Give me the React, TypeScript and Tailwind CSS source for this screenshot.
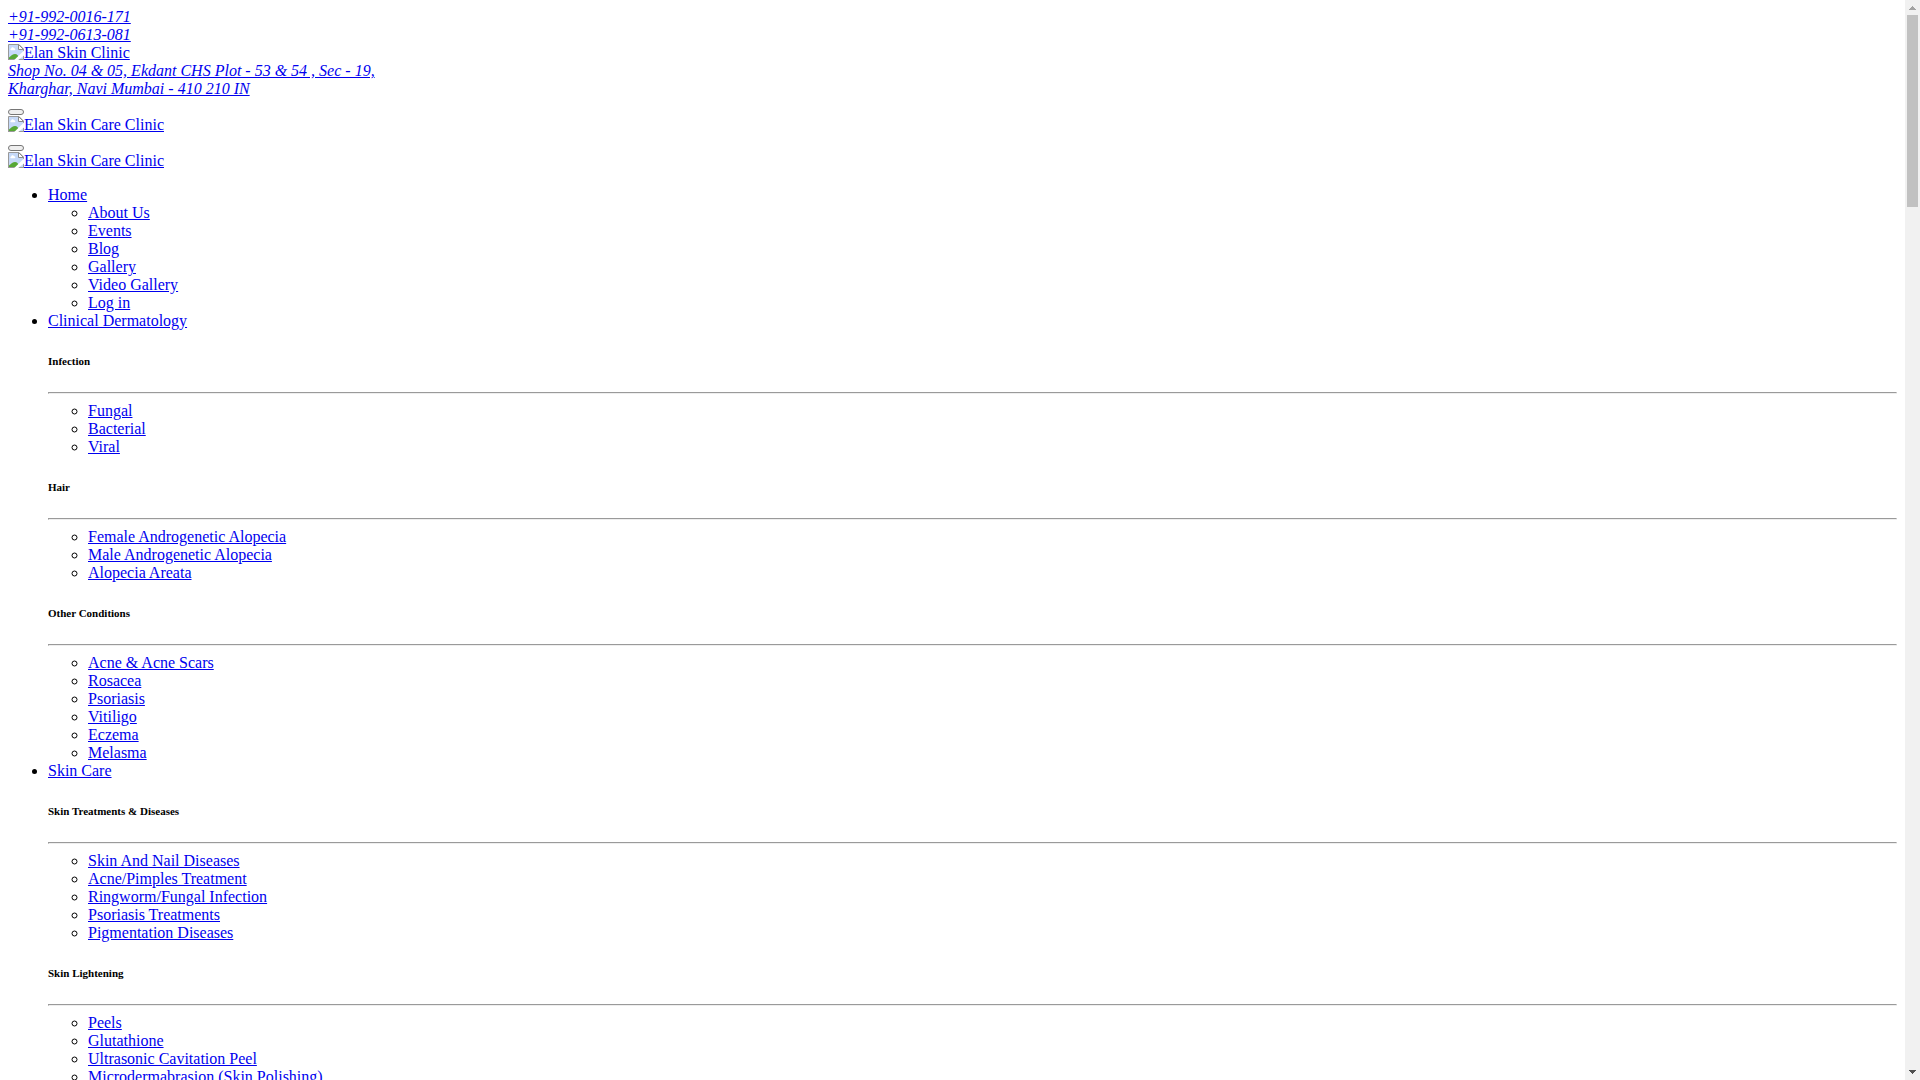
type Group = { title?: string; links: string[] };
type MenuEntry = { name: string; groups: Group[] };

const menu: MenuEntry[] = [
  {
    name: 'Home',
    groups: [{ links: ['About Us', 'Events', 'Blog', 'Gallery', 'Video Gallery', 'Log in'] }],
  },
  {
    name: 'Clinical Dermatology',
    groups: [
      { title: 'Infection', links: ['Fungal', 'Bacterial', 'Viral'] },
      { title: 'Hair', links: ['Female Androgenetic Alopecia', 'Male Androgenetic Alopecia', 'Alopecia Areata'] },
      { title: 'Other Conditions', links: ['Acne & Acne Scars', 'Rosacea', 'Psoriasis', 'Vitiligo', 'Eczema', 'Melasma'] },
    ],
  },
  {
    name: 'Skin Care',
    groups: [
      {
        title: 'Skin Treatments & Diseases',
        links: ['Skin And Nail Diseases', 'Acne/Pimples Treatment', 'Ringworm/Fungal Infection', 'Psoriasis Treatments', 'Pigmentation Diseases'],
      },
      {
        title: 'Skin Lightening',
        links: ['Peels', 'Glutathione', 'Ultrasonic Cavitation Peel', 'Microdermabrasion (Skin Polishing)'],
      },
    ],
  },
];

function BrokenImage() {
  return (
    <svg width="16" height="16" viewBox="0 0 16 16" aria-hidden="true" className="shrink-0">
      <path d="M0.5 0.5H11L15.5 5V15.5H0.5Z" fill="#c6d9f8" />
      <path d="M3 6.2C2.2 6.2 2 4.6 3.2 4.5C3.4 3 5.6 2.8 6 4.2C7.6 4 7.8 6.2 6.4 6.2Z" fill="#fff" />
      <path d="M1 15V13.6C3 11.5 5 10 7 10C9 10 10.5 11.6 11.5 15Z" fill="#57a835" />
      <path d="M0.5 16V0.5H11L15.5 5V16" fill="none" stroke="#999" />
      <path d="M0 15.5H16" stroke="#999" />
      <path d="M10.5 0.5V5.5H15.5Z" fill="#fff" stroke="#8a8a8a" />
      <path d="M16 6.6L6.2 16H10.2L16 11.4Z" fill="#fff" />
    </svg>
  );
}

function Logo({ alt }: { alt: string }) {
  return (
    <div className="flex">
      <a href="#" className="flex text-[#0000ee]">
        <BrokenImage />
        <span className="underline">{alt}</span>
      </a>
    </div>
  );
}

function Toggle({ label }: { label: string }) {
  return (
    <div className="flex h-[18px] items-end pb-px">
      <button type="button" aria-label={label} className="h-1.5 w-4 rounded-[3px] border border-[#767676] bg-[#efefef]" />
    </div>
  );
}

function Scrollbar() {
  return (
    <div aria-hidden="true" className="flex w-[15px] shrink-0 flex-col items-center bg-[#f1f1f1]">
      <svg width="15" height="15" shapeRendering="crispEdges">
        <path d="M7 6h1v1h1v1h1v1h1v1h-7v-1h1v-1h1v-1h1z" fill="#a3a3a3" />
      </svg>
      <div className="flex w-full flex-1 justify-center">
        <div className="h-48 w-[11px] bg-[#c1c1c1]" />
      </div>
      <svg width="15" height="15" shapeRendering="crispEdges">
        <path d="M4 5h7v1h-1v1h-1v1h-1v1h-1v-1h-1v-1h-1v-1h-1z" fill="#505050" />
      </svg>
    </div>
  );
}

export default function App() {
  return (
    <div className="flex h-screen bg-white font-['Liberation_Serif',serif] text-base leading-[18px] text-black">
      <main className="min-w-0 flex-1 overflow-y-auto p-2 [scrollbar-width:none]">
        <header>
          <address>
            <a href="tel:+919920016171" className="text-[#0000ee] underline">+91-992-0016-171</a>
            <br />
            <a href="tel:+919920613081" className="text-[#0000ee] underline">+91-992-0613-081</a>
          </address>
          <Logo alt="Elan Skin Clinic" />
          <address>
            <a href="#" className="text-[#0000ee] underline">
              Shop No. 04 &amp; 05, Ekdant CHS Plot - 53 &amp; 54 , Sec - 19,
              <br />
              Kharghar, Navi Mumbai - 410 210 IN
            </a>
          </address>
          <Toggle label="Open menu" />
          <Logo alt="Elan Skin Care Clinic" />
          <Toggle label="Close menu" />
          <Logo alt="Elan Skin Care Clinic" />
        </header>

        <nav>
          <ul className="my-4 list-disc pl-10">
            {menu.map(entry => (
              <li key={entry.name}>
                <a href="#" className="text-[#0000ee] underline">{entry.name}</a>
                {entry.groups.map((group, i) => (
                  <div key={i}>
                    {group.title && (
                      <>
                        <h6 className="my-[25px] text-[11px] leading-3 font-bold">{group.title}</h6>
                        <hr className="mb-2 h-0.5 border border-t-[#9a9a9a] border-r-[#eeeeee] border-b-[#eeeeee] border-l-[#9a9a9a]" />
                      </>
                    )}
                    <ul className="list-[circle] pl-10">
                      {group.links.map(link => (
                        <li key={link}>
                          <a href="#" className="text-[#0000ee] underline">{link}</a>
                        </li>
                      ))}
                    </ul>
                  </div>
                ))}
              </li>
            ))}
          </ul>
        </nav>
      </main>
      <Scrollbar />
    </div>
  );
}
